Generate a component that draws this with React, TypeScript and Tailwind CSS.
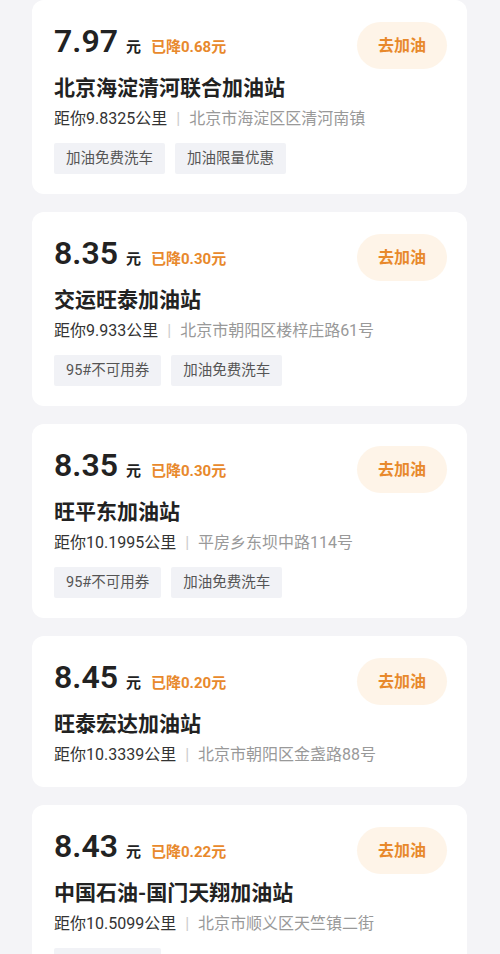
import React from "react";

type Station = {
  price: string;
  drop: string;
  name: string;
  distance: string;
  address: string;
  tags: string[];
};

const stations: Station[] = [
  {
    price: "7.97",
    drop: "0.68",
    name: "北京海淀清河联合加油站",
    distance: "9.8325",
    address: "北京市海淀区区清河南镇",
    tags: ["加油免费洗车", "加油限量优惠"],
  },
  {
    price: "8.35",
    drop: "0.30",
    name: "交运旺泰加油站",
    distance: "9.933",
    address: "北京市朝阳区楼梓庄路61号",
    tags: ["95#不可用券", "加油免费洗车"],
  },
  {
    price: "8.35",
    drop: "0.30",
    name: "旺平东加油站",
    distance: "10.1995",
    address: "平房乡东坝中路114号",
    tags: ["95#不可用券", "加油免费洗车"],
  },
  {
    price: "8.45",
    drop: "0.20",
    name: "旺泰宏达加油站",
    distance: "10.3339",
    address: "北京市朝阳区金盏路88号",
    tags: [],
  },
  {
    price: "8.43",
    drop: "0.22",
    name: "中国石油-国门天翔加油站",
    distance: "10.5099",
    address: "北京市顺义区天竺镇二街",
    tags: ["95#不可用券"],
  },
];

const StationCard = ({ s }: { s: Station }) => (
  <div className="bg-white rounded-[12px] pl-[22px] pr-[20px] pt-[22px] pb-[20px] mb-[18px]">
    {/* price row */}
    <div className="flex justify-between items-start">
      <div className="flex items-baseline h-[38px]">
        <span className="text-[32px] leading-[38px] font-semibold text-[#222]">{s.price}</span>
        <span className="text-[15px] font-bold text-[#222] ml-[8px]">元</span>
        <span className="text-[15px] font-bold text-[#e8892c] ml-[10px]">已降{s.drop}元</span>
      </div>
      <button className="w-[90px] h-[47px] rounded-full bg-[#fef4e8] text-[16px] font-bold text-[#e8892c] mr-[0px]">
        去加油
      </button>
    </div>

    <div className="mt-[5px] text-[21px] leading-[28px] font-bold text-[#222]">{s.name}</div>

    <div className="mt-[5px] flex items-center text-[16px] leading-[24px]">
      <span className="text-[#333]">距你{s.distance}公里</span>
      <span className="mx-[9px] text-[#ccc]">|</span>
      <span className="text-[#999]">{s.address}</span>
    </div>

    {s.tags.length > 0 && (
      <div className="mt-[12px] flex gap-[10px]">
        {s.tags.map((t) => (
          <span
            key={t}
            className="h-[31px] px-[12px] flex items-center bg-[#f1f2f6] rounded-[2px] text-[14.5px] text-[#555]"
          >
            {t}
          </span>
        ))}
      </div>
    )}
  </div>
);

export default function App() {
  return (
    <div
      className="min-h-screen bg-[#f4f4f7] pl-[32px] pr-[33px] pt-[0px] overflow-hidden h-[954px]"
      style={{ fontFamily: '"Roboto", "Noto Sans CJK SC", sans-serif' }}
    >
      {stations.map((s, i) => (
        <StationCard key={i} s={s} />
      ))}
    </div>
  );
}
